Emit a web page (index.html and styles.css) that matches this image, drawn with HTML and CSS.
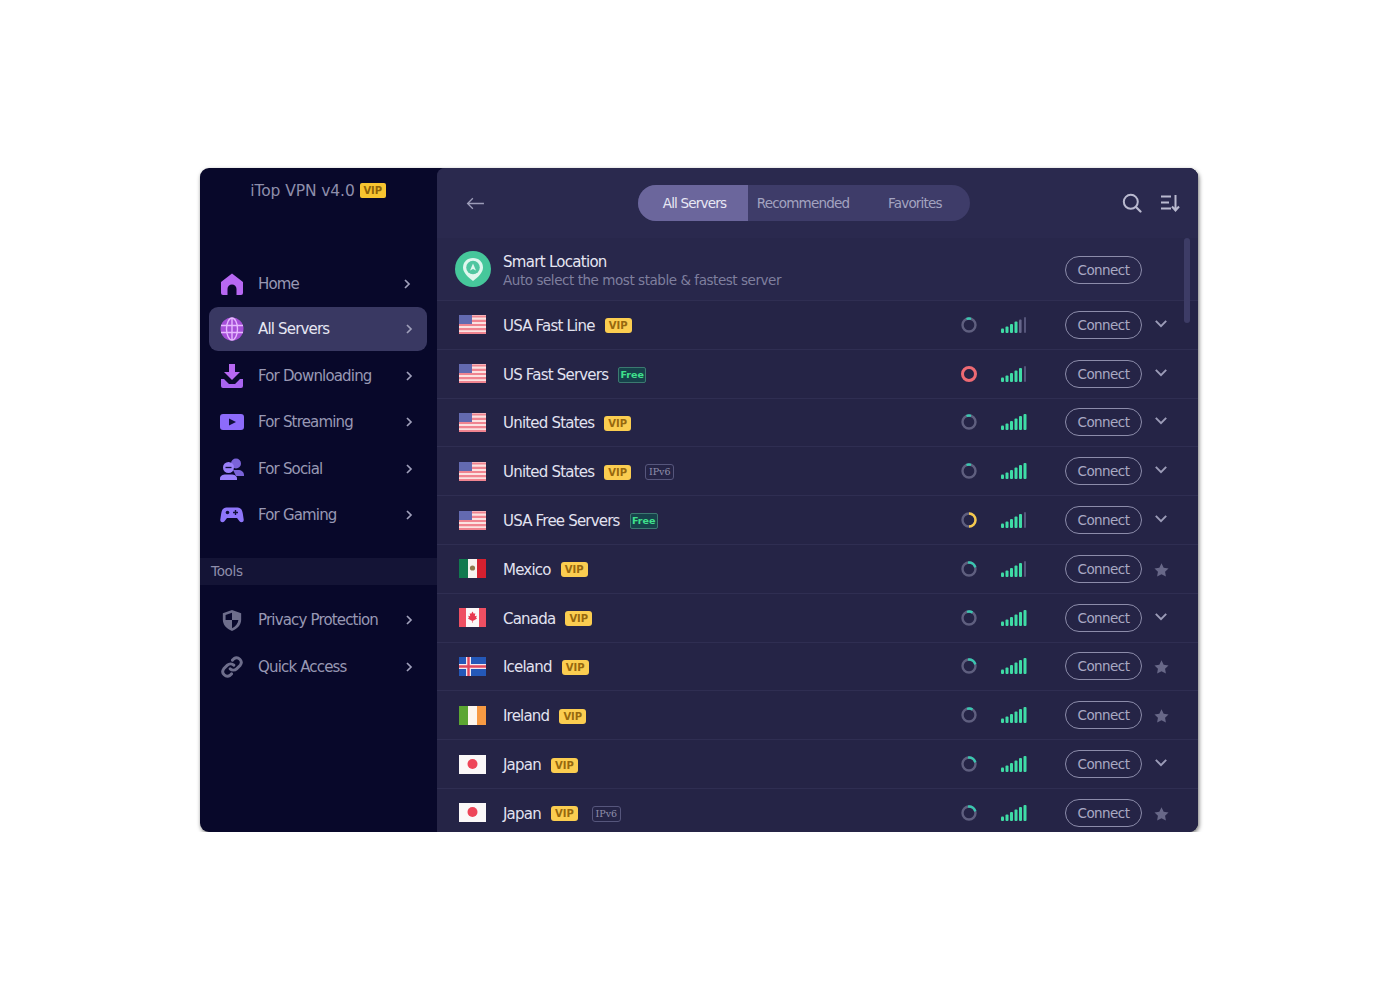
FILE: index.html
```html
<!DOCTYPE html>
<html lang="en">
<head>
  <meta charset="UTF-8" />
  <title>iTop VPN</title>
  <link rel="stylesheet" href="styles.css">
</head>
<body>
  <svg class="defs" width="0" height="0">
    <symbol id="chev-r" viewBox="0 0 10 12"><path d="M3 2l4 4-4 4" fill="none" stroke="currentColor" stroke-width="1.7"/></symbol>
    <symbol id="chev-d" viewBox="0 0 12 10"><path d="M2 3l4 4 4-4" fill="none" stroke="currentColor" stroke-width="1.5"/></symbol>
    <symbol id="star" viewBox="0 0 16 16"><path d="M8 .8l2.300 4.700 5.200.8-3.700 3.600.9 5.100L8 12.600l-4.700 2.400.9-5.100L.5 6.300l5.200-.8z" fill="currentColor"/></symbol>
    <symbol id="us" viewBox="0 0 27 19">
      <rect width="27" height="19" fill="#fbe2e1"/>
      <path d="M0 1.500h27M0 5.800h27M0 10h27M0 14.200h27M0 18h27" stroke="#f08490" stroke-width="2.200"/>
      <rect width="13" height="9" fill="#636ab0"/>
    </symbol>
    <symbol id="mx" viewBox="0 0 27 19">
      <rect width="27" height="19" fill="#f6f3ef"/><rect width="9" height="19" fill="#11794f"/><rect x="18" width="9" height="19" fill="#d4202f"/>
      <circle cx="13.500" cy="9" r="2.600" fill="#8f7a4c"/>
    </symbol>
    <symbol id="ca" viewBox="0 0 27 19">
      <rect width="27" height="19" fill="#fbf7f7"/><rect width="7" height="19" fill="#ee4f62"/><rect x="20" width="7" height="19" fill="#ee4f62"/>
      <path d="M13.500 3.500l1.300 2.300 1.500-.6-.5 3 2-.4-.7 2 1 .7-3.300 2-1 .2v2h-.6v-2l-1-.2-3.300-2 1-.7-.7-2 2 .4-.5-3 1.500.6z" fill="#e8384e"/>
    </symbol>
    <symbol id="is" viewBox="0 0 27 19">
      <rect width="27" height="19" fill="#2458b8"/>
      <path d="M0 9.500h27M9.500 0v19" stroke="#f3e9ef" stroke-width="5"/>
      <path d="M0 9.500h27M9.500 0v19" stroke="#e0475c" stroke-width="2.400"/>
    </symbol>
    <symbol id="ie" viewBox="0 0 27 19">
      <rect width="27" height="19" fill="#fdf6ee"/><rect width="9" height="19" fill="#5ca632"/><rect x="18" width="9" height="19" fill="#f79a43"/>
    </symbol>
    <symbol id="jp" viewBox="0 0 27 19">
      <rect width="27" height="19" fill="#fbf8f8"/><circle cx="13.500" cy="9" r="5" fill="#ee4558"/>
    </symbol>
    <symbol id="sig4" viewBox="0 0 26 18">
      <g fill="#3fdca6"><rect y="12.500" width="3" height="4.500" rx="1"/><rect x="4.500" y="10.500" width="3" height="6.500" rx="1"/><rect x="9" y="8" width="3" height="9" rx="1"/><rect x="13.500" y="5.500" width="3" height="11.500" rx="1"/></g>
      <rect x="18" y="3.500" width="2.600" height="13.500" rx="1" fill="#66668a"/><rect x="23" y="1" width="2" height="16" rx="1" fill="#55557a"/>
    </symbol>
    <symbol id="sig5" viewBox="0 0 26 18">
      <g fill="#3fdca6"><rect y="12.500" width="3" height="4.500" rx="1"/><rect x="4.500" y="10.500" width="3" height="6.500" rx="1"/><rect x="9" y="8" width="3" height="9" rx="1"/><rect x="13.500" y="5.500" width="3" height="11.500" rx="1"/><rect x="18" y="3" width="3" height="14" rx="1"/></g>
      <rect x="23" y="1" width="2" height="16" rx="1" fill="#55557a"/>
    </symbol>
    <symbol id="sig6" viewBox="0 0 26 18">
      <g fill="#3fdca6"><rect y="12.500" width="3" height="4.500" rx="1"/><rect x="4.500" y="10.500" width="3" height="6.500" rx="1"/><rect x="9" y="8" width="3" height="9" rx="1"/><rect x="13.500" y="5.500" width="3" height="11.500" rx="1"/><rect x="18" y="3" width="3" height="14" rx="1"/><rect x="22.500" y="1" width="3" height="16" rx="1"/></g>
    </symbol>
  </svg>

  <div class="window">
    <aside class="sidebar">
      <div class="brand">iTop VPN v4.0 <span class="brand-vip">VIP</span></div>
      <nav class="nav nav-main">
        <a class="nav-item nav-home">
          <svg class="nav-icon" viewBox="0 0 24 24"><path d="M12 1.500L23 10v11a2 2 0 0 1-2 2h-4.500v-6a4.500 4.500 0 0 0-9 0v6H3a2 2 0 0 1-2-2V10z" fill="#b768f2"/></svg>
          <span>Home</span>
          <svg class="chev"><use href="#chev-r"/></svg>
        </a>
        <a class="nav-item active">
          <svg class="nav-icon" viewBox="0 0 24 24"><circle cx="12" cy="12" r="11.500" fill="#a64fd8"/><g fill="none" stroke="#e6b8ff" stroke-width="1.400"><ellipse cx="12" cy="12" rx="5.500" ry="11"/><path d="M1 8.500h22M1 15.500h22M12 1v22"/></g></svg>
          <span>All Servers</span>
          <svg class="chev"><use href="#chev-r"/></svg>
        </a>
        <a class="nav-item">
          <svg class="nav-icon" viewBox="0 0 24 24"><path d="M9 0h6v8h5l-8 8-8-8h5z" fill="#b768f2"/><path d="M1 15h3l5 5h6l5-5h3v7a2 2 0 0 1-2 2H3a2 2 0 0 1-2-2z" fill="#a864f0"/></svg>
          <span>For Downloading</span>
          <svg class="chev"><use href="#chev-r"/></svg>
        </a>
        <a class="nav-item">
          <svg class="nav-icon" viewBox="0 0 24 24"><rect y="4" width="24" height="16" rx="3" fill="#8d6bfb"/><path d="M9 8.500l7 3.500-7 3.500z" fill="#10103a"/></svg>
          <span>For Streaming</span>
          <svg class="chev"><use href="#chev-r"/></svg>
        </a>
        <a class="nav-item">
          <svg class="nav-icon" viewBox="0 0 24 24"><circle cx="16" cy="6.500" r="5" fill="#7a63d8"/><path d="M13 13h5c3.500 0 6 2 6 5v1h-8z" fill="#7a63d8"/><circle cx="8.500" cy="10.500" r="5.500" fill="#9a80fa"/><path d="M5.500 10.500h6" stroke="#10103a" stroke-width="1.300"/><path d="M6 17.500h5c3.500 0 6 1.500 6 4v1.500H0v-1.500c0-2.500 2.500-4 6-4z" fill="#9a80fa"/></svg>
          <span>For Social</span>
          <svg class="chev"><use href="#chev-r"/></svg>
        </a>
        <a class="nav-item">
          <svg class="nav-icon" viewBox="0 0 24 24"><path d="M6.500 4.500h11c3 0 4.500 2 5.200 5.500l1 6.500c.4 2.500-2.700 3.700-4.200 1.700L17 15H7l-2.500 3.200c-1.500 2-4.600.8-4.200-1.700l1-6.500C2 6.500 3.500 4.500 6.500 4.500z" fill="#8f76fb"/><circle cx="7.500" cy="9.500" r="1.800" fill="#10103a"/><path d="M15.500 7v5M13 9.500h5" stroke="#10103a" stroke-width="1.400"/></svg>
          <span>For Gaming</span>
          <svg class="chev"><use href="#chev-r"/></svg>
        </a>
      </nav>
      <div class="tools-label">Tools</div>
      <nav class="nav">
        <a class="nav-item">
          <svg class="nav-icon nav-icon-sm" viewBox="0 0 24 24"><path d="M12 1l10 3.500v7c0 6-4 10-10 12.500C6 21.500 2 17.500 2 11.500v-7z" fill="#6e6e8c"/><path d="M12 4v8H5v-5.500zM12 12h7c-.5 4-3 7-7 9z" fill="#08082c"/></svg>
          <span>Privacy Protection</span>
          <svg class="chev"><use href="#chev-r"/></svg>
        </a>
        <a class="nav-item">
          <svg class="nav-icon nav-icon-sm" viewBox="0 0 24 24"><g fill="none" stroke="#6e6e8c" stroke-width="3.200" stroke-linecap="round"><path d="M10 14a5 5 0 0 0 7 0l4-4a5 5 0 0 0-7-7l-1.500 1.500"/><path d="M14 10a5 5 0 0 0-7 0l-4 4a5 5 0 0 0 7 7l1.500-1.500"/></g></svg>
          <span>Quick Access</span>
          <svg class="chev"><use href="#chev-r"/></svg>
        </a>
      </nav>
    </aside>

    <main class="main">
      <header class="topbar">
        <svg class="back" viewBox="0 0 18 12"><path d="M17 6H1.500M6.500 1l-5 5 5 5" fill="none" stroke="currentColor" stroke-width="1.200"/></svg>
        <div class="tabs">
          <span class="tab tab-active">All Servers</span>
          <span class="tab tab-rec">Recommended</span>
          <span class="tab tab-fav">Favorites</span>
        </div>
        <div class="top-icons">
          <svg class="top-icon" viewBox="0 0 20 20"><circle cx="8.800" cy="8.800" r="7" fill="none" stroke="currentColor" stroke-width="2"/><path d="M14 14l4.500 4.500" stroke="currentColor" stroke-width="2.200" stroke-linecap="round"/></svg>
          <svg class="top-icon" viewBox="0 0 20 20"><path d="M1 3.500h10M1 9.500h8M1 15.500h10" stroke="currentColor" stroke-width="2"/><path d="M15.500 2v15M12 13.500l3.500 4 3.500-4" fill="none" stroke="currentColor" stroke-width="2"/></svg>
        </div>
      </header>

      <div class="list">
        <div class="scrollbar"></div>

        <div class="row smart">
          <svg class="smart-icon" viewBox="0 0 36 36">
            <circle cx="18" cy="18" r="18" fill="#46c79b"/>
            <path d="M18 7c6 0 10 4.200 10 9.600 0 5.400-5 9.600-10 13.400-5-3.800-10-8-10-13.400C8 11.200 12 7 18 7z" fill="#dff7ee"/>
            <circle cx="18" cy="16.500" r="6.800" fill="#4fc6a0"/>
            <path d="M18 12.500l3 7-3-1.600-3 1.600z" fill="#dff7ee"/>
          </svg>
          <div class="smart-text">
            <div class="smart-title">Smart Location</div>
            <div class="smart-sub">Auto select the most stable &amp; fastest server</div>
          </div>
          <button class="connect connect-smart">Connect</button>
        </div>

        <div class="row">
          <svg class="flag"><use href="#us"/></svg>
          <span class="name">USA Fast Line</span><span class="badge vip">VIP</span>
          <svg class="ring" viewBox="0 0 16 16"><circle cx="8" cy="8" r="6.500"/><path class="arc" d="M5.500 2a6.500 6.500 0 0 1 4.500-.2"/></svg>
          <svg class="signal"><use href="#sig4"/></svg>
          <button class="connect">Connect</button>
          <svg class="extra chevd"><use href="#chev-d"/></svg>
        </div>
        <div class="row">
          <svg class="flag"><use href="#us"/></svg>
          <span class="name">US Fast Servers</span><span class="badge free">Free</span>
          <svg class="ring ring-red" viewBox="0 0 16 16"><circle cx="8" cy="8" r="6.500"/></svg>
          <svg class="signal"><use href="#sig5"/></svg>
          <button class="connect">Connect</button>
          <svg class="extra chevd"><use href="#chev-d"/></svg>
        </div>
        <div class="row">
          <svg class="flag"><use href="#us"/></svg>
          <span class="name">United States</span><span class="badge vip">VIP</span>
          <svg class="ring" viewBox="0 0 16 16"><circle cx="8" cy="8" r="6.500"/><path class="arc" d="M5.500 2a6.500 6.500 0 0 1 4.500-.2"/></svg>
          <svg class="signal"><use href="#sig6"/></svg>
          <button class="connect">Connect</button>
          <svg class="extra chevd"><use href="#chev-d"/></svg>
        </div>
        <div class="row">
          <svg class="flag"><use href="#us"/></svg>
          <span class="name">United States</span><span class="badge vip">VIP</span><span class="badge ipv6">IPv6</span>
          <svg class="ring" viewBox="0 0 16 16"><circle cx="8" cy="8" r="6.500"/><path class="arc" d="M5.500 2a6.500 6.500 0 0 1 4.500-.2"/></svg>
          <svg class="signal"><use href="#sig6"/></svg>
          <button class="connect">Connect</button>
          <svg class="extra chevd"><use href="#chev-d"/></svg>
        </div>
        <div class="row">
          <svg class="flag"><use href="#us"/></svg>
          <span class="name">USA Free Servers</span><span class="badge free">Free</span>
          <svg class="ring" viewBox="0 0 16 16"><circle cx="8" cy="8" r="6.500"/><path class="arc arc-yellow" d="M8 1.500a6.500 6.500 0 0 1 0 13"/></svg>
          <svg class="signal"><use href="#sig5"/></svg>
          <button class="connect">Connect</button>
          <svg class="extra chevd"><use href="#chev-d"/></svg>
        </div>
        <div class="row">
          <svg class="flag"><use href="#mx"/></svg>
          <span class="name">Mexico</span><span class="badge vip">VIP</span>
          <svg class="ring" viewBox="0 0 16 16"><circle cx="8" cy="8" r="6.500"/><path class="arc" d="M7 1.600a6.500 6.500 0 0 1 7.300 4.800"/></svg>
          <svg class="signal"><use href="#sig5"/></svg>
          <button class="connect">Connect</button>
          <svg class="extra staricon"><use href="#star"/></svg>
        </div>
        <div class="row">
          <svg class="flag"><use href="#ca"/></svg>
          <span class="name">Canada</span><span class="badge vip">VIP</span>
          <svg class="ring" viewBox="0 0 16 16"><circle cx="8" cy="8" r="6.500"/><path class="arc" d="M6 1.800a6.500 6.500 0 0 1 5.500.7"/></svg>
          <svg class="signal"><use href="#sig6"/></svg>
          <button class="connect">Connect</button>
          <svg class="extra chevd"><use href="#chev-d"/></svg>
        </div>
        <div class="row">
          <svg class="flag"><use href="#is"/></svg>
          <span class="name">Iceland</span><span class="badge vip">VIP</span>
          <svg class="ring" viewBox="0 0 16 16"><circle cx="8" cy="8" r="6.500"/><path class="arc" d="M7 1.600a6.500 6.500 0 0 1 7.300 4.800"/></svg>
          <svg class="signal"><use href="#sig6"/></svg>
          <button class="connect">Connect</button>
          <svg class="extra staricon"><use href="#star"/></svg>
        </div>
        <div class="row">
          <svg class="flag"><use href="#ie"/></svg>
          <span class="name">Ireland</span><span class="badge vip">VIP</span>
          <svg class="ring" viewBox="0 0 16 16"><circle cx="8" cy="8" r="6.500"/><path class="arc" d="M6 1.800a6.500 6.500 0 0 1 5.500.7"/></svg>
          <svg class="signal"><use href="#sig6"/></svg>
          <button class="connect">Connect</button>
          <svg class="extra staricon"><use href="#star"/></svg>
        </div>
        <div class="row">
          <svg class="flag"><use href="#jp"/></svg>
          <span class="name">Japan</span><span class="badge vip">VIP</span>
          <svg class="ring" viewBox="0 0 16 16"><circle cx="8" cy="8" r="6.500"/><path class="arc" d="M7 1.600a6.500 6.500 0 0 1 7.300 4.800"/></svg>
          <svg class="signal"><use href="#sig6"/></svg>
          <button class="connect">Connect</button>
          <svg class="extra chevd"><use href="#chev-d"/></svg>
        </div>
        <div class="row">
          <svg class="flag"><use href="#jp"/></svg>
          <span class="name">Japan</span><span class="badge vip">VIP</span><span class="badge ipv6">IPv6</span>
          <svg class="ring" viewBox="0 0 16 16"><circle cx="8" cy="8" r="6.500"/><path class="arc" d="M7 1.600a6.500 6.500 0 0 1 7.300 4.800"/></svg>
          <svg class="signal"><use href="#sig6"/></svg>
          <button class="connect">Connect</button>
          <svg class="extra staricon"><use href="#star"/></svg>
        </div>
      </div>
    </main>
  </div>
</body>
</html>
```

FILE: styles.css
```css
:root{
  --side:#08082a;
  --main:#252446;
  --head:#2a294e;
  --text:#dfdfee;
  --line:#2f2e52;
}
*{box-sizing:border-box;}
body{
  margin:0;
  padding:168px 0 0 200px;
  background:#fff;
  font-family:"DejaVu Sans",sans-serif;
  font-size:14px;
  color:var(--text);
}
.defs{position:absolute;}
.window{
  width:998px;
  height:664px;
  display:flex;
  overflow:hidden;
  border-radius:9px;
  background:var(--side);
  box-shadow:1px 2px 4px rgba(0,0,0,.55);
}

/* sidebar */
.sidebar{
  width:237px;
  flex:none;
  padding-top:14px;
}
.brand{
  display:flex;
  align-items:center;
  justify-content:center;
  gap:5px;
  height:17px;
  padding-right:1px;
  font-size:15.5px;
  letter-spacing:-.1px;
  color:#8e8eab;
}
.brand-vip{
  width:26px;
  height:15px;
  border-radius:2px;
  background:#f8c530;
  color:#8e6208;
  font-size:10px;
  font-weight:bold;
  line-height:15px;
  text-align:center;
}
.nav{
  display:flex;
  flex-direction:column;
  gap:2.6px;
  padding:0 10px 0 9px;
}
.nav-main{margin-top:62.5px;}
.nav-item{
  display:flex;
  align-items:center;
  height:44px;
  padding:0 13px 0 11px;
  border-radius:9px;
  font-size:15px;
  letter-spacing:-.83px;
  color:#9898b4;
}
.nav-home{margin-bottom:-1px;padding-right:15px;}
.nav-item span{flex:1;margin-left:14px;}
.nav-item.active{
  background:#393862;
  color:#e6e6f2;
}
.nav-icon{width:24px;height:24px;flex:none;}
.nav-icon-sm{width:22px;height:22px;margin:0 1px;}
.chev{width:10px;height:12px;flex:none;color:#a0a0bb;}
.tools-label{
  height:27px;
  margin:20.500px 0 13px;
  padding-left:11px;
  background:#141436;
  color:#8e8eab;
  font-size:13.500px;
  letter-spacing:-.3px;
  line-height:27px;
}

/* main */
.main{
  flex:1;
  min-width:0;
  background:var(--main);
  border-radius:8px 0 0 0;
}
.topbar{
  display:flex;
  align-items:center;
  height:70px;
  padding:0 18px 0 29px;
  background:var(--head);
  border-radius:8px 0 0 0;
}
.back{width:19px;height:13px;color:#9c9cb8;flex:none;}
.tabs{
  display:flex;
  height:36px;
  margin:0 auto 0 153px;
  border-radius:18px;
  overflow:hidden;
  background:#3e3c69;
  font-size:13.500px;
  letter-spacing:-.8px;
  line-height:36px;
  color:#a3a3c0;
}
.tab{display:block;text-align:center;}
.tab-active{width:110px;padding-left:3px;background:#6b669c;color:#e8e8f4;}
.tab-rec{width:110px;}
.tab-fav{width:112px;padding-left:30px;text-align:left;}
.top-icons{display:flex;gap:18px;color:#b9b9cf;}
.top-icon{width:20px;height:20px;}

.list{
  position:relative;
  height:594px;
  overflow:hidden;
}
.scrollbar{
  position:absolute;
  top:0;
  right:8px;
  width:6px;
  height:85px;
  border-radius:3px;
  background:#3d3c66;
}
.row{
  display:flex;
  align-items:center;
  height:48.800px;
  padding:0 29px 0 22px;
  border-bottom:1px solid var(--line);
}
.smart{
  height:63px;
  padding-left:18px;
  background:#28274b;
}
.smart-icon{width:36px;height:36px;flex:none;margin-right:12px;}
.smart-text{flex:1;padding-top:3px;}
.smart-title{font-size:15px;letter-spacing:-.71px;line-height:18px;color:#e6e6f2;}
.smart-sub{font-size:13.500px;letter-spacing:-.45px;line-height:18px;color:#7f7f9e;}
.connect-smart{margin:2px 27px 0 0;}
.flag{width:27px;height:19px;flex:none;margin-right:17px;}
.name{margin-top:2px;font-size:15px;letter-spacing:-.8px;color:#e2e2f0;}
.badge{
  height:15px;
  margin:2px 0 0 10px;
  border-radius:3px;
  font-size:10px;
  line-height:15px;
  text-align:center;
  flex:none;
}
.vip{width:27px;background:#fbcd50;color:#96670e;font-weight:bold;}
.free{width:28px;height:16px;background:#17424b;border:1px solid #3b7a70;border-radius:2px;color:#3fe08c;font-weight:bold;line-height:14px;font-size:9.500px;}
.ipv6{width:29px;height:16px;margin-left:14px;border:1px solid #56567c;color:#8f8fab;line-height:14px;font-family:"DejaVu Serif",serif;font-size:9.500px;}
.ring{
  width:16px;
  height:16px;
  margin-left:auto;
  flex:none;
  fill:none;
  stroke:#5f5f7f;
  stroke-width:2.400;
}
.arc{stroke:#39c8b0;}
.arc-yellow{stroke:#f6c94c;}
.ring-red{stroke:#ef6a73;stroke-width:3;}
.signal{width:26px;height:18px;margin-left:24px;flex:none;}
.connect{
  width:77px;
  height:28px;
  margin-left:38px;
  flex:none;
  padding:0;
  background:transparent;
  border:1.500px solid #8c8caa;
  border-radius:14px;
  font:13.500px "DejaVu Sans",sans-serif;
  letter-spacing:-.55px;
  color:#a9a9c3;
}
.extra{width:16px;height:16px;margin-left:11px;flex:none;}
.chevd{height:13px;margin-bottom:3px;color:#9c9cb8;}
.staricon{margin:2px 0 0 12px;width:15px;color:#686888;}
```
